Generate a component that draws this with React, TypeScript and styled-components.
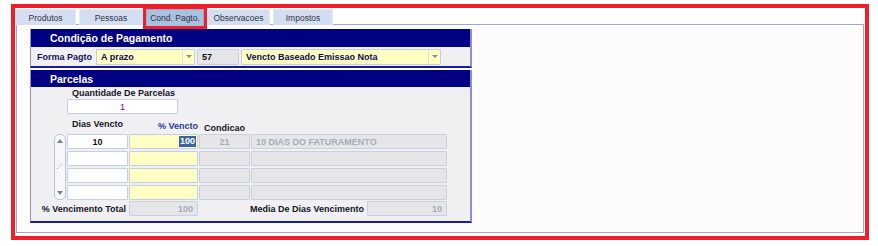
import React from 'react';
import styled, { createGlobalStyle } from 'styled-components';

const NAVY = '#000080';
const RED = '#f01e28';
const FONT = '"Liberation Sans", Arial, sans-serif';

const GlobalStyle = createGlobalStyle`
  body {
    margin: 0;
    background: #ffffff;
    font-family: ${FONT};
  }
`;

const Frame = styled.div`
  box-sizing: border-box;
  margin: 4px 0 0 11px;
  width: 858px;
  height: 236px;
  border: 4px solid ${RED};
  background: #ffffff;
`;

const TabBar = styled.div`
  display: flex;
  gap: 3px;
  margin-top: 1px;
  height: 16px;
`;

const Tab = styled.div<{ $w: number; $active?: boolean }>`
  box-sizing: border-box;
  width: ${p => p.$w}px;
  height: ${p => (p.$active ? 17 : 16)}px;
  display: flex;
  align-items: center;
  justify-content: center;
  font-size: 8.5px;
  color: #303048;
  background: ${p => (p.$active ? '#a9c1dd' : '#d3dff0')};
  border: 1px solid ${p => (p.$active ? '#98b0d0' : '#e2eaf6')};
  border-bottom: none;
  outline: ${p => (p.$active ? `3px solid ${RED}` : 'none')};
  position: relative;
  z-index: ${p => (p.$active ? 2 : 0)};
`;

const Content = styled.div`
  box-sizing: border-box;
  margin: -1px 1px 0 1px;
  height: 209px;
  border: 1px solid #98acd0;
  background: #fcfcfd;
  padding: 4px 0 0 13px;
  display: flex;
  flex-direction: column;
  gap: 2px;
`;

const Section = styled.div`
  width: 442px;
  box-sizing: border-box;
  border-left: 1px solid #8c8cd0;
  border-right: 2px solid #8c8cd0;
  border-bottom: 2px solid #1a1aa0;
  background: #f0f0f2;
`;

const SectionHeader = styled.div<{ $h: number }>`
  height: ${p => p.$h}px;
  background: ${NAVY};
  color: #ffffff;
  font-weight: bold;
  font-size: 10.5px;
  display: flex;
  align-items: center;
  padding-left: 19px;
`;

const FormRow = styled.div`
  display: flex;
  align-items: center;
  height: 19px;
  padding-left: 6px;
  gap: 2px;
`;

const Label = styled.div<{ $color?: string; $w?: number; $lift?: number }>`
  font-size: 9px;
  font-weight: bold;
  color: ${p => p.$color ?? '#141428'};
  white-space: nowrap;
  width: ${p => (p.$w ? `${p.$w}px` : 'auto')};
  text-align: ${p => (p.$w ? 'right' : 'left')};
  padding-bottom: ${p => p.$lift ?? 0}px;
`;

const Field = styled.div<{
  $tone: 'white' | 'yellow' | 'grey';
  $w?: number;
  $align?: 'left' | 'center' | 'right';
  $color?: string;
  $weight?: string;
}>`
  box-sizing: border-box;
  width: ${p => (p.$w ? `${p.$w}px` : '100%')};
  height: 15px;
  display: flex;
  align-items: center;
  justify-content: ${p =>
    p.$align === 'center' ? 'center' : p.$align === 'right' ? 'flex-end' : 'flex-start'};
  padding: 0 4px;
  font-size: 9px;
  font-weight: ${p => p.$weight ?? 'bold'};
  color: ${p => p.$color ?? '#101020'};
  white-space: nowrap;
  overflow: hidden;
  background: ${p =>
    p.$tone === 'yellow' ? '#ffffc4' : p.$tone === 'grey' ? '#e6e6e8' : '#ffffff'};
  border: 1px solid ${p => (p.$tone === 'grey' ? '#c6d0e2' : '#c2cfe4')};
  border-radius: 1px;
`;

const SelectBox = styled(Field)`
  height: 16px;
  padding-right: 0;
  justify-content: space-between;
  color: #0c0c50;
`;

const Arrow = styled.span`
  width: 11px;
  height: 100%;
  display: flex;
  align-items: center;
  justify-content: center;
  border-left: 1px solid #e0e0e0;
  &::after {
    content: '';
    border-left: 3px solid transparent;
    border-right: 3px solid transparent;
    border-top: 3px solid #8a8a90;
  }
`;

const Selected = styled.span`
  background: #3d62a4;
  color: #ffffff;
  height: 11px;
  line-height: 11px;
  padding: 0 1px;
  margin-right: -3px;
`;

const Body = styled.div`
  padding: 1px 0 5px 0;
`;

const QtyBlock = styled.div`
  margin-left: 36px;
  width: 111px;
`;

const QtyLabel = styled(Label)`
  height: 11px;
  line-height: 10px;
  padding-left: 5px;
`;

const Table = styled.div`
  display: grid;
  grid-template-columns: 12px 61px 69px 51px 196px;
  grid-template-rows: 18px repeat(4, 15px);
  column-gap: 1px;
  row-gap: 2px;
  margin-left: 23px;
`;

const HeadCell = styled.div<{ $col: number; $pad?: number; $right?: boolean }>`
  grid-column: ${p => p.$col};
  grid-row: 1;
  align-self: end;
  display: flex;
  justify-content: ${p => (p.$right ? 'flex-end' : 'flex-start')};
  padding-left: ${p => p.$pad ?? 0}px;
  margin-bottom: -2px;
`;

const Scroll = styled.div`
  grid-column: 1;
  grid-row: 2 / span 4;
  box-sizing: border-box;
  border: 1px solid #b8c4d8;
  border-radius: 5px;
  background: #f6f7fa;
  display: flex;
  flex-direction: column;
  align-items: center;
  justify-content: space-between;
  padding: 4px 0;
`;

const ScrollArrow = styled.span<{ $down?: boolean }>`
  width: 0;
  height: 0;
  border-left: 3px solid transparent;
  border-right: 3px solid transparent;
  ${p => (p.$down ? 'border-top: 4px solid #7a7f8c;' : 'border-bottom: 4px solid #7a7f8c;')}
`;

const Footer = styled.div`
  display: flex;
  align-items: center;
  margin-top: 1px;
  padding-left: 9px;
  height: 15px;
`;

const Spacer = styled.div<{ $w: number }>`
  width: ${p => p.$w}px;
  flex-shrink: 0;
`;

const tabs = [
  { label: 'Produtos', w: 61 },
  { label: 'Pessoas', w: 64 },
  { label: 'Cond. Pagto.', w: 58, active: true },
  { label: 'Observacoes', w: 63 },
  { label: 'Impostos', w: 60 },
];

const rows = [
  { dias: '10', pct: '100', cod: '21', desc: '10 DIAS DO FATURAMENTO' },
  { dias: '', pct: '', cod: '', desc: '' },
  { dias: '', pct: '', cod: '', desc: '' },
  { dias: '', pct: '', cod: '', desc: '' },
];

const GREY_TEXT = '#a4acbc';

export default function App() {
  return (
    <>
      <GlobalStyle />
      <Frame>
        <TabBar>
          {tabs.map(t => (
            <Tab key={t.label} $w={t.w} $active={t.active}>
              {t.label}
            </Tab>
          ))}
        </TabBar>
        <Content>
          <Section>
            <SectionHeader $h={18}>Condição de Pagamento</SectionHeader>
            <FormRow>
              <Label $color="#101060">Forma Pagto</Label>
              <SelectBox $tone="yellow" $w={99} style={{ marginLeft: 2 }}>
                A prazo
                <Arrow />
              </SelectBox>
              <Field $tone="grey" $w={42} style={{ height: 16 }}>
                57
              </Field>
              <SelectBox $tone="yellow" $w={200}>
                Vencto Baseado Emissao Nota
                <Arrow />
              </SelectBox>
            </FormRow>
          </Section>

          <Section>
            <SectionHeader $h={17}>Parcelas</SectionHeader>
            <Body>
              <QtyBlock>
                <QtyLabel>Quantidade De Parcelas</QtyLabel>
                <Field $tone="white" $align="center" $color="#800080" $weight="normal">
                  1
                </Field>
              </QtyBlock>

              <Table>
                <HeadCell $col={2} $pad={5}>
                  <Label $lift={5}>Dias Vencto</Label>
                </HeadCell>
                <HeadCell $col={3} $right>
                  <Label $color="#2a3a9c" $lift={3}>% Vencto</Label>
                </HeadCell>
                <HeadCell $col={4} $pad={5}>
                  <Label $lift={1}>Condicao</Label>
                </HeadCell>

                <Scroll>
                  <ScrollArrow />
                  <svg width="6" height="6" viewBox="0 0 6 6">
                    <rect x="4" y="0" width="1" height="1" fill="#9aa2b2" />
                    <rect x="2" y="2" width="1" height="1" fill="#9aa2b2" />
                    <rect x="0" y="4" width="1" height="1" fill="#9aa2b2" />
                  </svg>
                  <ScrollArrow $down />
                </Scroll>

                {rows.map((r, i) => (
                  <React.Fragment key={i}>
                    <Field $tone="white" $align="center" style={{ gridColumn: 2 }}>
                      {r.dias}
                    </Field>
                    <Field $tone="yellow" $align="right" style={{ gridColumn: 3 }}>
                      {r.pct && <Selected>{r.pct}</Selected>}
                    </Field>
                    <Field $tone="grey" $align="center" $color={GREY_TEXT} style={{ gridColumn: 4 }}>
                      {r.cod}
                    </Field>
                    <Field $tone="grey" $color={GREY_TEXT} style={{ gridColumn: 5 }}>
                      {r.desc}
                    </Field>
                  </React.Fragment>
                ))}
              </Table>

              <Footer>
                <Label $w={86}>% Vencimento Total</Label>
                <Spacer $w={3} />
                <Field $tone="grey" $w={69} $align="right" $color={GREY_TEXT}>
                  100
                </Field>
                <Spacer $w={51} />
                <Label $w={115}>Media De Dias Vencimento</Label>
                <Spacer $w={3} />
                <Field $tone="grey" $w={80} $align="right" $color={GREY_TEXT}>
                  10
                </Field>
              </Footer>
            </Body>
          </Section>
        </Content>
      </Frame>
    </>
  );
}
